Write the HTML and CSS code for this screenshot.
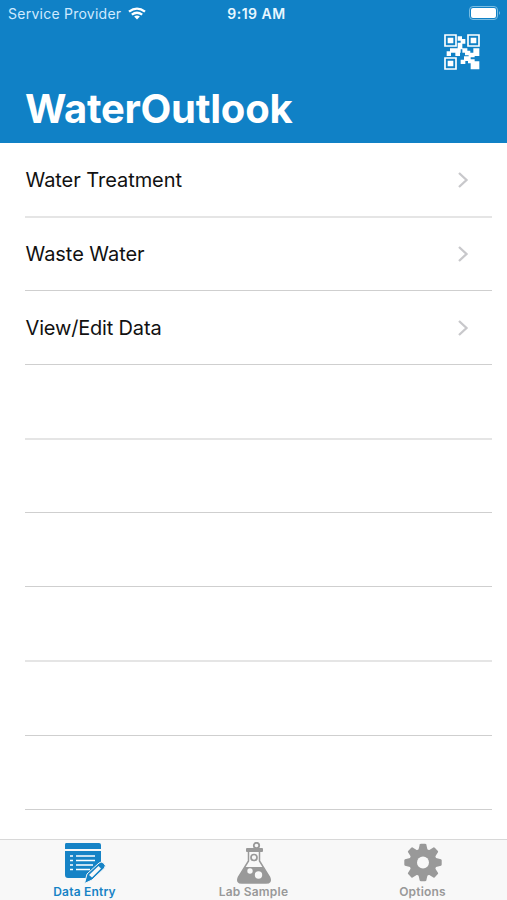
FILE: index.html
```html
<!DOCTYPE html>
<html lang="en">
<head>
<meta charset="utf-8">
<title>WaterOutlook</title>
<link rel="stylesheet" href="styles.css">
</head>
<body>
<header class="header">
  <div class="status">
    <div class="carrier"><span>Service Provider</span>
      <svg class="wifi" width="18" height="13" viewBox="0 0 18 13" fill="none" stroke="#fff" stroke-width="2.3"><path d="M1 4.7Q9-1.5 17 4.7M3.8 7.7Q9 3.7 14.2 7.7"/><path d="M6.1 9.5Q9 7.5 11.9 9.5L9 12.5Z" fill="#fff" stroke="none"/></svg>
    </div>
    <span class="time">9:19 AM</span>
    <svg class="battery" width="33" height="14" viewBox="0 0 33 14"><rect x=".5" y=".5" width="28" height="13" rx="3.5" fill="none" stroke="#79bde2"/><rect x="2" y="2" width="25" height="10" rx="2" fill="#fff"/><path d="M30 5Q32 7 30 9Z" fill="#79bde2"/></svg>
  </div>
  <div class="actions">
    <svg width="36" height="36" viewBox="0 0 108 108" fill="#fff"><g fill="none" stroke="#fff" stroke-width="5"><path d="M3 3H36V36H3ZM72 3H105V36H72ZM3 72H36V105H3Z"/></g><path d="M11 11H28V28H11ZM80 11H97V28H80ZM11 80H28V97H11ZM41 7H54V20H41ZM50 15H64V29H50ZM41 26H55V46H41ZM18 43H50V56H18ZM8 52H21V66H8ZM34 52H48V66H34ZM55 43H70V56H55ZM63 50H79V64H63ZM88 43H106V66H88ZM74 56H92V70H74ZM60 67H80V81H60ZM50 77H64V90H50ZM72 76H92V88H72ZM80 82H106V106H80Z"/></svg>
  </div>
  <h1>WaterOutlook</h1>
</header>
<main class="list">
  <div class="row heavy"><span>Water Treatment</span><svg class="chevron" width="12" height="18" viewBox="0 0 12 18"><path d="M2 2L9.5 9L2 16"/></svg></div>
  <div class="row"><span>Waste Water</span><svg class="chevron" width="12" height="18" viewBox="0 0 12 18"><path d="M2 2L9.5 9L2 16"/></svg></div>
  <div class="row"><span class="view">View/Edit Data</span><svg class="chevron" width="12" height="18" viewBox="0 0 12 18"><path d="M2 2L9.5 9L2 16"/></svg></div>
  <div class="row heavy"></div>
  <div class="row"></div>
  <div class="row"></div>
  <div class="row heavy"></div>
  <div class="row"></div>
  <div class="row"></div>
</main>
<nav class="tabs">
  <div class="tab active">
    <svg width="42" height="42" viewBox="0 0 42 42"><path d="M2 1H35Q37 1 37 3V7H1V3Q1 1 2 1ZM1 9H37V21L23 36H4Q1 36 1 33Z" fill="currentColor"/><path d="M6 14H9M12 14H31M6 18.500H9M12 18.500H31M6 23H9M12 23H29M6 27.500H9M12 27.500H26" stroke="#fff" stroke-width="1.7"/><path d="M20.500 41.500L23 32L35 21Q37 19 39.500 21Q42.500 23.500 40.500 26L28 38Z" fill="currentColor" stroke="#f8f8f8" stroke-width="1"/><path d="M25 33L34.500 24L37 26.500L28 35.500Z" fill="#f8f8f8"/></svg>
    <span>Data Entry</span>
  </div>
  <div class="tab">
    <svg width="34" height="42" viewBox="0 0 34 42"><path d="M10 6H25Q26 6 26 7V9Q26 10 25 10H10Q9 10 9 9V7Q9 6 10 6Z" fill="currentColor"/><circle cx="19.5" cy="3.5" r="2.7" fill="none" stroke="currentColor" stroke-width="1.8"/><path d="M11.5 10V19L1.5 35Q-1 41 5 41H29Q35 41 32.5 35L22.5 19V10" fill="none" stroke="currentColor" stroke-width="1.5"/><path d="M8 25H26L32.5 35Q35 41 29 41H5Q-1 41 1.5 35Z" fill="currentColor"/><circle cx="17" cy="15.5" r="3" fill="none" stroke="currentColor" stroke-width="1.7"/><circle cx="13" cy="29" r="2.7" fill="#f8f8f8"/><circle cx="21.5" cy="33" r="3.7" fill="#f8f8f8"/></svg>
    <span>Lab Sample</span>
  </div>
  <div class="tab">
    <svg width="38" height="42" viewBox="0 0 38 42"><g fill="currentColor" transform="translate(19 20.5)"><circle r="13.7"/><g id="teeth"><path id="tooth" d="M-4.7-12L-3.3-18Q-3-18.7-2-18.7H2Q3-18.7 3.3-18L4.7-12V12L3.3 18Q3 18.7 2 18.7H-2Q-3 18.7-3.3 18L-4.7 12Z"/><use href="#tooth" transform="rotate(45)"/></g><use href="#teeth" transform="rotate(90)"/><circle r="6" fill="#f8f8f8"/></g></svg>
    <span>Options</span>
  </div>
</nav>
</body>
</html>
```
FILE: styles.css
```css
* { box-sizing: border-box; }
body {
  margin: 0;
  width: 507px;
  height: 900px;
  display: flex;
  flex-direction: column;
  overflow: hidden;
  background: #fff;
  color: #111;
  font-family: Inter, "Liberation Sans", sans-serif;
}
.header {
  flex: none;
  height: 142.5px;
  background: #1081c6;
  color: #fff;
}
.status {
  height: 26px;
  display: grid;
  grid-template-columns: 1fr auto 1fr;
  align-items: center;
  padding: 0 5px 0 8px;
  font-size: 14px;
}
.carrier {
  display: flex;
  align-items: center;
  gap: 7px;
  color: #cfeaff;
  white-space: nowrap;
  letter-spacing: .25px;
}
.time {
  font-weight: 600;
  letter-spacing: .5px;
  color: #e8f7ff;
  margin-left: 3px;
}
.battery { justify-self: end; }
.actions {
  display: flex;
  justify-content: flex-end;
  padding: 8px 27px 0 0;
  height: 44px;
}
h1 {
  margin: 15px 0 0 25px;
  font-size: 40px;
  line-height: 48px;
  font-weight: 700;
  letter-spacing: -.25px;
  white-space: nowrap;
}
.list {
  flex: 1;
  min-height: 0;
  padding: 0 15px 0 25px;
}
.row {
  height: 74.13px;
  display: flex;
  align-items: center;
  justify-content: space-between;
  padding: 2px 23px 0 .5px;
  border-bottom: 1px solid #cfcfcf;
  font-size: 20px;
  letter-spacing: -.05px;
}
.row.heavy {
  height: 75.13px;
  margin-bottom: -1px;
  border-bottom: 2px solid #e5e5e5;
}
.view { letter-spacing: -.17px; }
.chevron {
  fill: none;
  stroke: #c8c8cb;
  stroke-width: 2.3;
}
.tabs {
  flex: none;
  height: 61px;
  display: grid;
  grid-template-columns: repeat(3, 1fr);
  border-top: 1px solid #d8d8d8;
  background: #f8f8f8;
}
.tab {
  display: flex;
  flex-direction: column;
  align-items: center;
  padding-top: 2px;
  color: #999;
  font-size: 12px;
  line-height: 15px;
  font-weight: 600;
  letter-spacing: .2px;
}
.tab.active { color: #1683c6; }
.tab svg { flex: none; }
```
